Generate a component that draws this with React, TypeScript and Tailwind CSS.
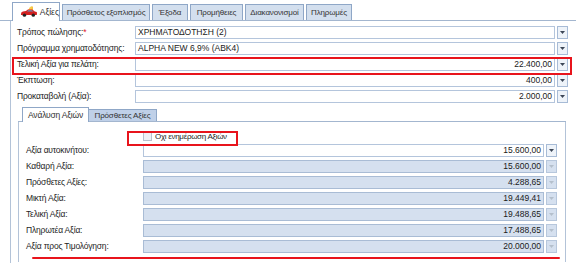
import React from "react";

const Arrow = ({ disabled }: { disabled?: boolean }) => (
  <svg width="5" height="3" viewBox="0 0 5 3">
    <path d="M0 0 H5 L2.5 3 Z" fill={disabled ? "#b4bfcc" : "#3c4656"} />
  </svg>
);

const Field = ({
  value,
  align = "right",
  disabled,
  width,
}: {
  value?: string;
  align?: "left" | "right";
  disabled?: boolean;
  width: string;
}) => (
  <div className="flex h-[13px] gap-[2px]">
    <div
      className={
        width +
        " h-[13px] border flex items-center px-[2px] leading-none " +
        (disabled ? "bg-[#d5e0ef] border-[#a9bcd5]" : "bg-white border-[#b4c5dc]") +
        (align === "right" ? " justify-end" : " justify-start")
      }
    >
      <span className="text-[8.5px] text-[#1a1a1a] whitespace-nowrap">{value}</span>
    </div>
    <div
      className={
        "w-[11px] h-[13px] border flex items-center justify-center " +
        (disabled ? "bg-[#d5e0ef] border-[#b7c7dc]" : "bg-[#eef3f9] border-[#a7bbd6]")
      }
    >
      <Arrow disabled={disabled} />
    </div>
  </div>
);

const MainRow = ({
  label,
  value,
  align,
  star,
}: {
  label: string;
  value: string;
  align?: "left" | "right";
  star?: boolean;
}) => (
  <div className="flex items-center h-[13px]">
    <div className="w-[118px] text-[8.5px] tracking-[-0.2px] text-[#1e1e1e] whitespace-nowrap leading-none">
      {label}
      {star && <span className="text-[#e0202a]">*</span>}
    </div>
    <Field value={value} align={align} width="w-[420px]" />
  </div>
);

const InnerRow = ({
  label,
  value,
  disabled,
}: {
  label: string;
  value: string;
  disabled?: boolean;
}) => (
  <div className="flex items-center h-[13px]">
    <div className="w-[117px] text-[8.5px] tracking-[-0.2px] text-[#1e1e1e] whitespace-nowrap leading-none">{label}</div>
    <Field value={value} disabled={disabled} width="w-[401px]" />
  </div>
);

const CarIcon = () => (
  <svg width="18" height="12" viewBox="0 0 18 12">
    <path d="M7 6 L11 0.5 L13 0.5 L13 6 Z" fill="#f2b418" />
    <path d="M10 1 L12 1 L12 6 L8 6 Z" fill="#f7d050" />
    <path d="M1 8 Q1 6 3 5.6 L6 5 L8 3.5 L12.5 3.5 L15 5.5 L17 6 Q17.5 7 17 9 L1 9 Z" fill="#d42020" />
    <path d="M8.3 4.2 L12 4.2 L13.8 5.6 L7 5.6 Z" fill="#6a8fb8" />
    <circle cx="4.5" cy="9.2" r="1.7" fill="#222" />
    <circle cx="13.5" cy="9.2" r="1.7" fill="#222" />
  </svg>
);

const Tab = ({ label, w }: { label: string; w: string }) => (
  <div
    className={
      w +
      " h-[16px] flex items-center justify-center border border-b-0 border-[#8fa7c7] bg-[#d3dfee] text-[8px] tracking-[-0.15px] text-[#333] whitespace-nowrap leading-none"
    }
  >
    {label}
  </div>
);

export default function App() {
  return (
    <div
      className="relative w-[576px] h-[263px] overflow-hidden bg-white"
      style={{ fontFamily: '"Liberation Sans", Arial, sans-serif' }}
    >
      {/* top tabs */}
      <div className="h-[21px] pl-[12px] flex items-end gap-[2px] border-b border-[#a3b6cf]">
        <div className="relative top-[1px] h-[19px] w-[48px] pl-[7px] flex items-center gap-[2px] border border-b-0 border-[#8fa7c7] bg-white text-[8.5px] text-[#333] leading-none">
          <CarIcon />
          <span>Αξίες</span>
        </div>
        <Tab label="Πρόσθετος εξοπλισμός" w="w-[88px]" />
        <Tab label="Έξοδα" w="w-[36px]" />
        <Tab label="Προμήθειες" w="w-[53px]" />
        <Tab label="Διακανονισμοί" w="w-[59px]" />
        <Tab label="Πληρωμές" w="w-[46px]" />
      </div>

      {/* outer panel */}
      <div className="ml-[10px] h-[242px] border-l border-[#b3c3d8] pl-[6px] pt-[5px] flex flex-col">
        <div className="flex flex-col gap-[3px]">
          <MainRow label="Τρόπος πώλησης:" star value="ΧΡΗΜΑΤΟΔΟΤΗΣΗ (2)" align="left" />
          <MainRow label="Πρόγραμμα χρηματοδότησης:" value="ALPHA NEW 6,9% (ABK4)" align="left" />
          <MainRow label="Τελική Αξία για πελάτη:" value="22.400,00" />
          <MainRow label="Έκπτωση:" value="400,00" />
          <MainRow label="Προκαταβολή (Αξία):" value="2.000,00" />
        </div>

        {/* inner tabs */}
        <div className="mt-[4px] ml-[1px] w-[548px]">
          <div className="h-[15px] pl-[4px] flex items-end border-b border-[#a3b6cf]">
            <div className="relative top-[1px] h-[15px] w-[67px] flex items-center justify-center border border-b-0 border-[#8fa7c7] bg-white text-[8.5px] tracking-[-0.2px] text-[#333] leading-none whitespace-nowrap">
              Ανάλυση Αξιών
            </div>
            <div className="h-[12px] w-[68px] flex items-center justify-center border border-b-0 border-l-0 border-[#8fa7c7] bg-[#bfd0e8] text-[8px] tracking-[-0.15px] text-[#333] leading-none whitespace-nowrap">
              Πρόσθετες Αξίες
            </div>
          </div>
          <div className="h-[140px] border-l border-r border-[#b3c3d8] pl-[7px]">
            <div className="h-[22px] flex items-center pl-[117px] pt-[7px] gap-[3px]">
              <div className="w-[9px] h-[9px] border border-[#b9c2cf] bg-[#eef1f5]" />
              <span className="text-[8px] tracking-[-0.3px] text-[#1e1e1e] leading-none whitespace-nowrap">Οχι ενημέρωση Αξιών</span>
            </div>
            <div className="flex flex-col gap-[3px]">
              <InnerRow label="Αξία αυτοκινήτου:" value="15.600,00" />
              <InnerRow label="Καθαρή Αξία:" value="15.600,00" disabled />
              <InnerRow label="Πρόσθετες Αξίες:" value="4.288,65" disabled />
              <InnerRow label="Μικτή Αξία:" value="19.449,41" disabled />
              <InnerRow label="Τελική Αξία:" value="19.488,65" disabled />
              <InnerRow label="Πληρωτέα Αξία:" value="17.488,65" disabled />
              <InnerRow label="Αξία προς Τιμολόγηση:" value="20.000,00" disabled />
            </div>
          </div>
        </div>
      </div>

      {/* red annotations */}
      <div className="absolute left-[12px] top-[57px] w-[560px] h-[18px] border-2 border-[#e8141c]" />
      <div className="absolute left-[127px] top-[131px] w-[111px] h-[15px] border-2 border-[#e8141c]" />
      <div className="absolute left-[32px] top-[257px] w-[528px] h-[2px] bg-[#e8141c] rounded-full" />
    </div>
  );
}
